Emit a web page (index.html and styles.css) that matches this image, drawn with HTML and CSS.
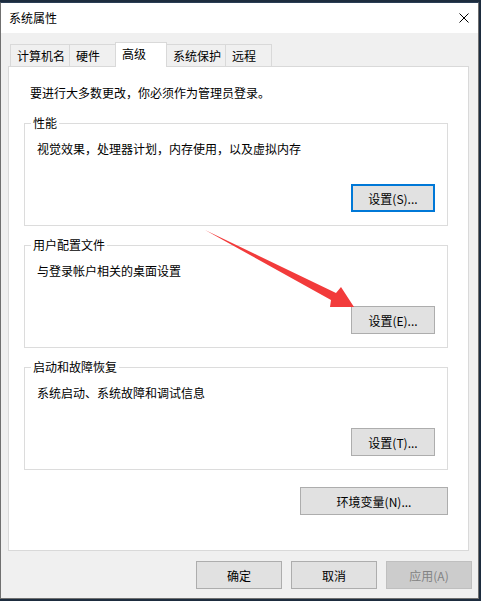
FILE: index.html
```html
<!doctype html>
<html lang="zh-CN">
    <head>
        <meta charset="UTF-8" />
        <meta name="viewport" content="width=device-width, initial-scale=1.0" />
        <title>系统属性</title>
        <link rel="stylesheet" href="styles.css">
    </head>
    <body>
        <div class="window">
            <div class="titlebar">
                <span class="title">系统属性</span>
                <svg class="close" width="10" height="10" viewBox="0 0 10 10">
                    <path d="M0.5 0.5L9.5 9.5M9.5 0.5L0.5 9.5" stroke="#000" stroke-width="1" fill="none" />
                </svg>
            </div>

            <div class="dialog">
                <div class="tabs">
                    <div class="tab">计算机名</div>
                    <div class="tab">硬件</div>
                    <div class="tab tab-active">高级</div>
                    <div class="tab">系统保护</div>
                    <div class="tab">远程</div>
                </div>

                <div class="panel">
                    <p class="intro">要进行大多数更改，你必须作为管理员登录。</p>

                    <fieldset class="group">
                        <legend>性能</legend>
                        <div class="group-body">
                            <p>视觉效果，处理器计划，内存使用，以及虚拟内存</p>
                            <div class="group-actions">
                                <button class="btn btn-focus">设置(S)...</button>
                            </div>
                        </div>
                    </fieldset>

                    <fieldset class="group">
                        <legend>用户配置文件</legend>
                        <div class="group-body">
                            <p>与登录帐户相关的桌面设置</p>
                            <div class="group-actions">
                                <button class="btn">设置(E)...</button>
                            </div>
                        </div>
                    </fieldset>

                    <fieldset class="group">
                        <legend>启动和故障恢复</legend>
                        <div class="group-body">
                            <p>系统启动、系统故障和调试信息</p>
                            <div class="group-actions">
                                <button class="btn">设置(T)...</button>
                            </div>
                        </div>
                    </fieldset>

                    <div class="panel-actions">
                        <button class="btn btn-wide">环境变量(N)...</button>
                    </div>
                </div>

                <div class="footer">
                    <button class="btn btn-footer">确定</button>
                    <button class="btn btn-footer">取消</button>
                    <button class="btn btn-footer" disabled>应用(A)</button>
                </div>
            </div>
        </div>

        <!-- red pointer drawn over the dialog -->
        <svg class="arrow" width="481" height="601" viewBox="0 0 481 601">
            <polygon points="205,230 336,293 341,287 354,307 330,307 331,300" fill="#f23b3b" />
        </svg>
    </body>
</html>
```

FILE: styles.css
```css
html {
    background: #1d2c3e;
}
body {
    margin: 0;
    font-family: "Noto Sans CJK SC", sans-serif;
    font-size: 12px;
    color: #000;
}
.window {
    width: 479px;
    height: 597px;
    margin-top: 2px;
    box-sizing: border-box;
    border: 1px solid #707070;
    border-top-color: #2a3d55;
    background: #f0f0f0;
    display: flex;
    flex-direction: column;
}
.titlebar {
    height: 30px;
    flex: none;
    background: #fff;
    display: flex;
    align-items: center;
    justify-content: space-between;
    padding: 0 9px 0 8px;
}
.title {
    line-height: 16px;
}
.close {
    display: block;
}
.dialog {
    flex: 1;
    padding-top: 9px;
}

/* tab strip */
.tabs {
    display: flex;
    align-items: flex-end;
    height: 24px;
    margin-left: 9px;
}
.tab {
    height: 22px;
    min-width: 47px;
    box-sizing: border-box;
    border: 1px solid #d9d9d9;
    border-bottom: 0;
    margin-left: -1px;
    padding: 0 4px 0 6px;
    line-height: 21px;
    background: #f0f0f0;
}
.tab:first-child {
    margin-left: 0;
}
.tab-active {
    position: relative;
    z-index: 1;
    height: 25px;
    min-width: 52px;
    margin-bottom: -1px;
    padding-bottom: 3px;
    background: #fff;
}

/* page content */
.panel {
    width: 461px;
    height: 485px;
    margin-left: 7px;
    box-sizing: border-box;
    border: 1px solid #d9d9d9;
    background: #fff;
    padding: 0 20px 0 15px;
}
.intro {
    margin: 18px 0 0 6px;
    line-height: 16px;
}
.group {
    margin: 14px 0 0;
    padding: 0;
    min-width: 0;
    border: 1px solid #dcdcdc;
}
.group + .group {
    margin-top: 11px;
}
.group legend {
    margin-left: 6px;
    padding: 0 2px;
    line-height: 16px;
}
.group-body {
    padding: 10px 12px 13px;
}
.group-body p {
    margin: 0;
    line-height: 16px;
}
.group-actions,
.panel-actions {
    display: flex;
    justify-content: flex-end;
}
.group-actions {
    margin-top: 27px;
}
.panel-actions {
    margin-top: 17px;
}

/* buttons */
.btn {
    width: 84px;
    height: 28px;
    box-sizing: border-box;
    padding: 0;
    border: 1px solid #adadad;
    background: #e1e1e1;
    font: inherit;
    color: #000;
}
.btn-focus {
    border: 2px solid #0078d7;
}
.btn-wide {
    width: 148px;
}
.btn-footer {
    width: 86px;
}
.btn:disabled {
    background: #ccc;
    border-color: #bfbfbf;
    color: #838383;
}
.footer {
    display: flex;
    justify-content: flex-end;
    gap: 9px;
    margin-top: 10px;
    padding-right: 6px;
}

.arrow {
    position: absolute;
    top: 0;
    left: 0;
    pointer-events: none;
}
```
